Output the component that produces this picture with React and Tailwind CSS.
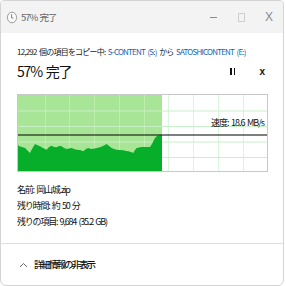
import React from 'react';

const FONT = { fontFamily: '"Noto Sans CJK JP", "Liberation Sans", sans-serif' };

const wave = [
  [0, 50], [1.3, 51.3], [4, 52], [7, 53], [9, 55], [12, 58], [14, 54], [17, 49], [19, 50], [22, 51.3], [25, 53],
  [28.7, 54.7], [31, 52], [33.7, 50.7], [36, 52], [38.7, 52.3], [41, 51], [43.7, 51.3], [46, 53], [48.7, 54],
  [51, 53.5], [53.7, 53], [56, 54], [58.7, 54.7], [62, 55], [65.3, 56.3], [68, 54], [70.3, 53], [73, 54],
  [75.3, 53.7], [79, 53], [82, 52.3], [85, 51], [88.7, 49], [91, 51], [93.7, 53], [96, 54], [98.7, 54.7],
  [102, 55], [105.3, 55.3], [108, 56], [110.3, 56.3], [113, 57], [115.3, 58], [117, 55], [118.7, 53],
  [121, 52.5], [123.7, 52], [128, 52], [132, 52], [134, 49], [135.3, 46.3], [137, 43], [138.7, 41.3],
  [141, 40.5], [144, 40],
];

const Graph = () => {
  const pts = wave.map(([x, y]) => `${x},${y}`).join(' ');
  const vLines = [27, 51, 76, 101, 126, 150, 175, 200, 225];
  const hLines = [16, 31.5, 47, 62.5];
  return (
    <div className="relative mt-[13px] w-[251px] h-[78px] border border-[#c8c8c8] bg-white">
      <svg width="249" height="76" viewBox="0 0 249 76" className="block">
        <rect x="0" y="0" width="144" height="76" fill="#a9e597" />
        {vLines.map((x) => (
          <line key={'v' + x} x1={x + 0.5} y1="0" x2={x + 0.5} y2="76" stroke={x < 144 ? '#bdeeab' : '#d9f5dc'} strokeWidth="1" />
        ))}
        {hLines.map((y) => (
          <line key={'h' + y} x1="0" y1={y} x2="249" y2={y} stroke="#c8f0c8" strokeWidth="1" />
        ))}
        <polygon points={`0,76 ${pts} 144,76`} fill="#06ae2a" />
        <line x1="0" y1="40" x2="249" y2="40" stroke="#000" strokeWidth="1.2" />
      </svg>
      <span className="absolute right-[3px] top-[22px] text-[9px] leading-[12px] tracking-[-1px] [word-spacing:1.5px] text-[#111]" style={FONT}>
        速度: 18.6 MB/s
      </span>
    </div>
  );
};

export default function App() {
  return (
    <div className="w-[286px] h-[286px] bg-white" style={FONT}>
      <div className="w-[284px] h-[286px] border border-[#d4d4d4] rounded-b-[6px] rounded-t-[4px] flex flex-col overflow-hidden">
        <div className="h-[32px] bg-[#f3f3f3] flex items-center shrink-0">
          <svg width="12" height="13" viewBox="0 0 12 13" className="ml-[5px]">
            <ellipse cx="6" cy="6.5" rx="4.6" ry="5.3" fill="#fafafa" stroke="#9a9a9a" strokeWidth="1" />
            <path d="M5.6 3.2 V7 H7.4" fill="none" stroke="#777" strokeWidth="0.9" />
          </svg>
          <span className="ml-[3px] text-[9.5px] tracking-[-1px] [word-spacing:1px] text-[#666]">57% 完了</span>
          <div className="ml-auto flex items-center text-[#9a9a9a]">
            <div className="w-[28px] flex justify-center">
              <div className="w-[7px] h-px bg-[#8a8a8a]" />
            </div>
            <div className="w-[28px] flex justify-center">
              <div className="w-[7px] h-[9px] border border-[#cfcfcf]" />
            </div>
            <div className="w-[28px] flex justify-center text-[12px] font-light text-[#8a8a8a]" style={{ fontFamily: '"Liberation Sans", sans-serif' }}>X</div>
          </div>
        </div>

        <div className="flex flex-col pl-[16px] flex-1">
          <div className="mt-[13px] text-[8px] leading-[12px] tracking-[-0.8px] [word-spacing:1.5px] text-[#222] whitespace-nowrap">
            12,292 個の項目をコピー中: <span className="text-[#1a5fb4]">S-CONTENT (S:)</span> から <span className="text-[#1a5fb4]">SATOSHICONTENT (E:)</span>
          </div>
          <div className="flex items-center mt-[3px] h-[20px]">
            <span className="text-[14px] leading-[20px] tracking-[-1.2px] [word-spacing:2px] text-[#111]">57% 完了</span>
            <div className="ml-auto flex items-center mr-[18px]">
              <div className="flex gap-[2px] mr-[24px]">
                <div className="w-[1.5px] h-[7px] bg-[#111]" />
                <div className="w-[1.5px] h-[7px] bg-[#111]" />
              </div>
              <span className="text-[10px] font-bold text-[#111]" style={{ fontFamily: '"Liberation Sans", sans-serif' }}>x</span>
            </div>
          </div>

          <Graph />

          <div className="mt-[10px] flex flex-col text-[9px] leading-[16px] tracking-[-1.2px] [word-spacing:1.5px] text-[#111]">
            <div>名前: 岡山城.zip</div>
            <div>残り時間: 約 50 分</div>
            <div>残りの項目: 9,684 (35.2 GB)</div>
          </div>
        </div>

        <div className="border-t border-[#dedede] h-[42px] shrink-0 flex items-center pl-[18px]">
          <svg width="9" height="6" viewBox="0 0 9 6" className="mr-[6px]">
            <path d="M1 5 L4.5 1.5 L8 5" fill="none" stroke="#555" strokeWidth="0.9" />
          </svg>
          <span className="text-[9.5px] font-medium tracking-[-2px] text-[#111]">詳細情報の非表示</span>
        </div>
      </div>
    </div>
  );
}
